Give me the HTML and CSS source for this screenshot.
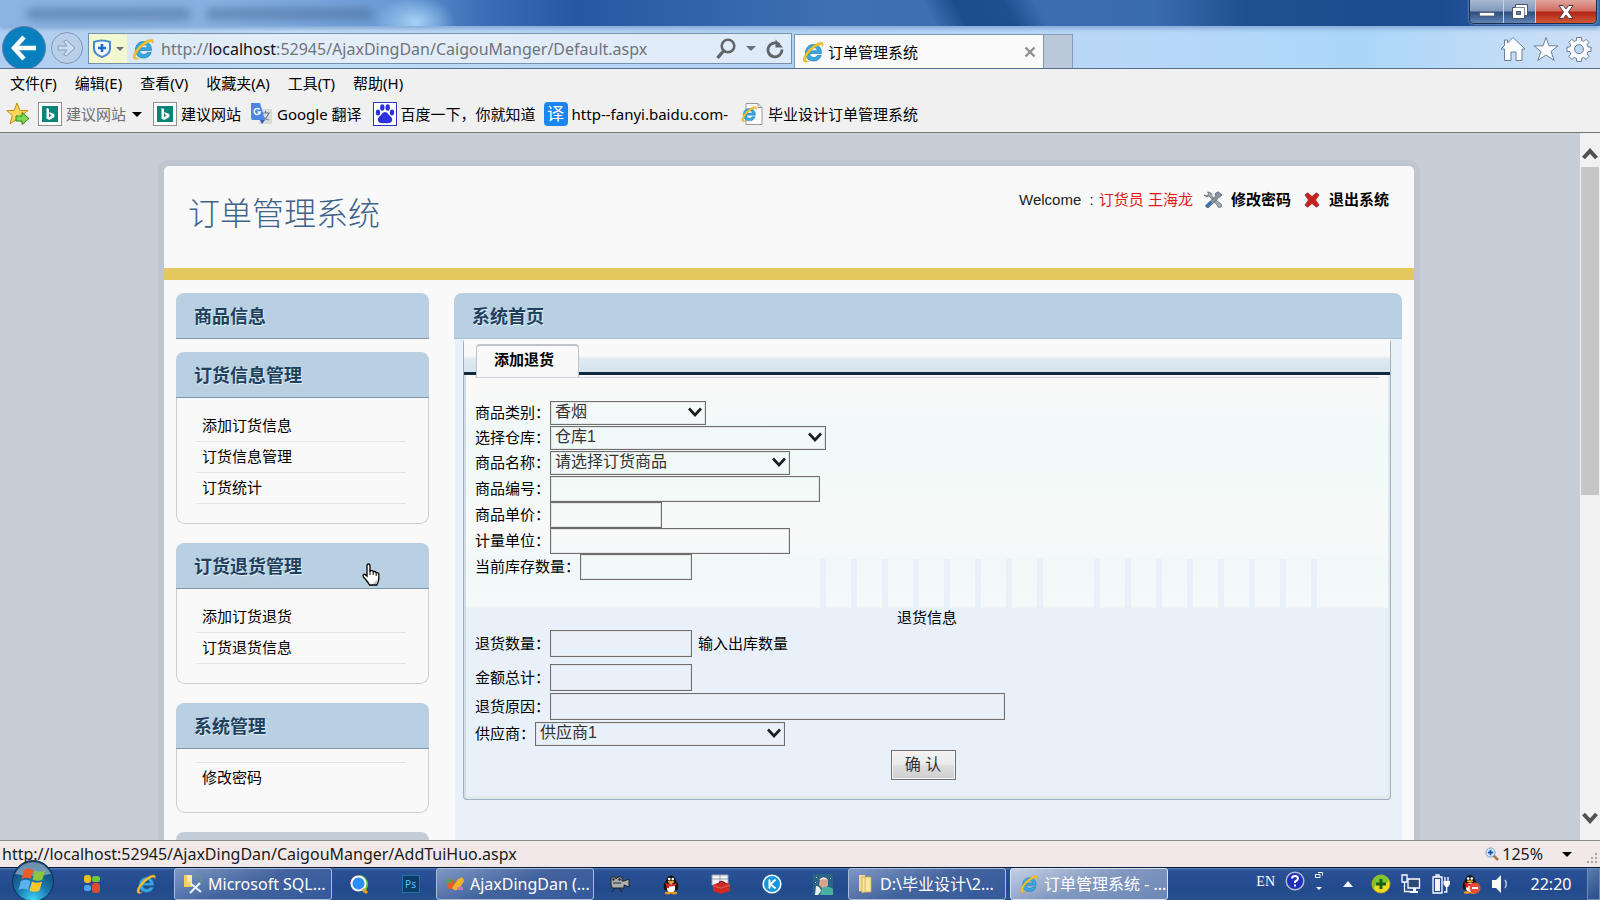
FILE: index.html
```html
<!DOCTYPE html>
<html lang="zh-CN">
<head>
<meta charset="utf-8">
<title>订单管理系统</title>
<link rel="stylesheet" href="styles.css">
</head>
<body>
<svg class="defs" aria-hidden="true">
  <symbol id="ie" viewBox="0 0 24 24">
    <path fill-rule="evenodd" d="M20.500 13.500H8.600C8.800 16 10.400 17.500 12.700 17.500C14.400 17.500 15.600 16.700 16.200 15.500H20.200C19.200 19 16.200 21 12.600 21C7.600 21 4.500 17.600 4.500 12.700C4.500 8 7.800 4.500 12.600 4.500C17.800 4.500 20.700 8.200 20.500 13.500ZM8.700 10.800H16.400C16.200 8.800 14.800 7.500 12.700 7.500C10.500 7.500 9 8.700 8.700 10.800Z" fill="#3aa9e0" stroke="#1c78b8" stroke-width=".7"/>
    <path d="M21.800 6.500C22.600 4.200 22.300 2.500 20.800 2.200C18.100 1.600 12.200 4.800 7.600 9.700C3 14.700 1 20 3 21.800C4.100 22.700 6 22.300 8 21.200C6 21.600 5 21.300 4.800 20C4.500 17.500 7.100 13.200 11.100 9.700C15.100 6.100 19.400 4 20.900 4.800C21.400 5.100 21.700 5.600 21.800 6.500Z" fill="#f5c52c" stroke="#d79a10" stroke-width=".4"/>
  </symbol>
  <symbol id="bing" viewBox="0 0 24 24">
    <rect x=".5" y=".5" width="23" height="23" fill="#fff" stroke="#8d9090"/>
    <rect x="4" y="4" width="16" height="16" fill="#0d8479"/>
    <path d="M8.500 6v10.500l2.800 1.500 5-3v-3l-5.300-2 1 2.600 1.800.8-2.800 1.600V7z" fill="#fff"/>
  </symbol>
  <symbol id="chev" viewBox="0 0 16 12"><path d="M2 2.500 8 9l6-6.500" fill="none" stroke="#1c1c1c" stroke-width="2.600"/></symbol>
  <symbol id="qq" viewBox="0 0 20 22">
    <ellipse cx="10" cy="11" rx="6.500" ry="10" fill="#111"/><ellipse cx="4" cy="13" rx="2" ry="4.500" fill="#111"/><ellipse cx="16" cy="13" rx="2" ry="4.500" fill="#111"/>
    <ellipse cx="10" cy="15" rx="4.600" ry="5.500" fill="#fff"/><circle cx="8" cy="5" r="1.500" fill="#fff"/><circle cx="12" cy="5" r="1.500" fill="#fff"/>
    <ellipse cx="10" cy="8" rx="3.600" ry="1.300" fill="#f6a81c"/><path d="M4 9q6 3.500 12 0v2.600q-6 3-12 0z" fill="#e0201c"/><path d="M5 11h3v4H5z" fill="#e0201c"/>
    <ellipse cx="6.500" cy="20.500" rx="3.500" ry="1.500" fill="#f0951c"/><ellipse cx="13.500" cy="20.500" rx="3.500" ry="1.500" fill="#f0951c"/>
  </symbol>
</svg>

<header class="chrome">
  <div class="titlebar">
    <span class="ghost ghost-a"></span><span class="ghost ghost-b"></span>
    <div class="winbtns">
      <button type="button" class="wb wb-min" aria-label="最小化"><svg width="18" height="16" viewBox="0 0 18 16"><rect x="1.500" y="8.500" width="15" height="3.500" fill="#fff" stroke="#46546c" stroke-width=".8"/></svg></button>
      <button type="button" class="wb wb-max" aria-label="还原"><svg width="20" height="18" viewBox="0 0 20 18"><path d="M5.500 1.500h12v11h-3v3h-12v-11h3z" fill="#fff" stroke="#46546c"/><path d="M6.500 8.500h4v3h-4z" fill="#7086a8" stroke="#46546c"/><path d="M5.500 4.500h9v8" fill="none" stroke="#46546c" stroke-width=".7"/></svg></button>
      <button type="button" class="wb wb-close" aria-label="关闭"><svg width="18" height="16" viewBox="0 0 18 16"><path d="M2 1.500h4.500L9 5l2.500-3.500H16L11.500 8l4.500 6.500h-4.500L9 11l-2.500 3.500H2L6.500 8z" fill="#fff" stroke="#5a3a40"/></svg></button>
    </div>
  </div>
  <div class="navbar">
    <button type="button" class="back" aria-label="后退"><svg width="26" height="26" viewBox="0 0 26 26"><path d="M13 2 3 13l10 11M3 13h22" fill="none" stroke="#fff" stroke-width="4.600"/></svg></button>
    <button type="button" class="forward" aria-label="前进"><svg width="20" height="18" viewBox="0 0 20 18"><path d="M1 7h9L6.500 2.500 9.500 1 18 9l-8.500 8-3-1.500L10 11H1z" fill="#c8dcf2" stroke="#8a9cb8"/></svg></button>
    <div class="address">
      <div class="shield"><svg width="20" height="20" viewBox="0 0 20 20"><path d="M2 3q8-3 16 0v6.500q0 6-8 8.500-8-2.500-8-8.500z" fill="#f4f9ff" stroke="#4a88cc" stroke-width="2"/><path d="M10 5v8M6 9h8" stroke="#1c6cc8" stroke-width="2.600"/></svg><i class="tri tri-s"></i></div>
      <svg class="ie" width="24" height="24"><use href="#ie"/></svg>
      <div class="url">http://<b>localhost</b>:52945/AjaxDingDan/CaigouManger/Default.aspx</div>
      <svg width="20" height="22" viewBox="0 0 20 22"><circle cx="12" cy="8" r="6.300" fill="none" stroke="#5f6469" stroke-width="2.600"/><path d="m7.500 13-6 7" stroke="#5f6469" stroke-width="3.400"/></svg>
      <i class="tri tri-m"></i>
      <svg width="18" height="20" viewBox="0 0 18 20"><path d="M13.500 5.500a7 7 0 1 0 2.500 5" fill="none" stroke="#5f6469" stroke-width="2.800"/><path d="M9.500.5v8h7.500z" fill="#5f6469"/></svg>
    </div>
    <div class="tab">
      <svg width="24" height="24"><use href="#ie"/></svg>
      <span class="tab-title">订单管理系统</span>
      <button type="button" class="tab-close" aria-label="关闭标签"><svg width="12" height="12" viewBox="0 0 12 12"><path d="m1.500 1.500 9 9m0-9-9 9" stroke="#8c8f92" stroke-width="2.300"/></svg></button>
    </div>
    <div class="newtab"></div>
    <div class="tools">
      <svg width="26" height="26" viewBox="0 0 26 26"><path d="M13 1.500 25 13h-3v11.500h-6V16h-5v8.500H4.500V13H1l3.500-3.500V4h3v3z" fill="#fafcff" stroke="#6c8099"/></svg>
      <svg width="26" height="26" viewBox="0 0 26 26"><path d="m13 1.500 3 8.300h9L18 15.500l3.200 9L13 19l-8.200 5.500 3.200-9L1 9.800h9z" fill="#fafcff" stroke="#6c8099"/></svg>
      <svg width="26" height="26" viewBox="0 0 26 26"><path d="M10.500 1.500h5v3l2.300 1 2.200-2.200 3 3-2 2.500 1 2.200h3v4.500h-3l-1 2.500 2 2.300-3 3.200-2.300-2-2.200.9v3h-5v-3l-2.300-.9-2.400 2-3-3.200 2-2.300-1-2.500h-2.800V11h2.800l1-2.200-2-2.500 3-3L8.200 5.500l2.300-1z" fill="#fafcff" stroke="#6c8099"/><circle cx="13" cy="13.200" r="4.500" fill="#bcd8f4" stroke="#6c8099"/></svg>
    </div>
  </div>
</header>

<nav class="menubar">
  <span>文件(F)</span><span>编辑(E)</span><span>查看(V)</span><span>收藏夹(A)</span><span>工具(T)</span><span>帮助(H)</span>
</nav>
<nav class="favbar">
  <svg class="fav-star" width="24" height="24" viewBox="0 0 24 24"><path d="m11 1 3 7.500h8l-6 5 2.300 8L11 17l-7 5 2.300-8.500L.8 8.500H8z" fill="#fbd657" stroke="#c78c1c"/><path d="M10 14h6v-3.500l7 6-7 6V19h-6z" fill="#7ed957" stroke="#2f8a20"/></svg>
  <a href="#" class="fav fav-dim"><svg width="24" height="24"><use href="#bing"/></svg><span>建议网站</span><i class="tri tri-l"></i></a>
  <a href="#" class="fav"><svg width="24" height="24"><use href="#bing"/></svg><span>建议网站</span></a>
  <a href="#" class="fav"><svg width="24" height="24" viewBox="0 0 24 24"><rect x="10" y="7" width="13" height="15" fill="#d8dade"/><path d="M12 11h9M16.500 9v2m3 0q-1 5-5.500 7m-1-4q2 3 7 4" stroke="#6c7a86" stroke-width="1.200" fill="none"/><path d="M2 1h9l5 17H4q-2 0-2-2z" fill="#4a86e8"/><path d="m11 18h5l-3 4z" fill="#2a5cb8"/><path d="M10.500 7.500a3 3 0 1 0 .7 2.500H8.500" stroke="#fff" stroke-width="1.500" fill="none"/></svg><span>Google 翻译</span></a>
  <a href="#" class="fav fav-baidu"><svg width="24" height="24" viewBox="0 0 24 24"><rect x=".5" y=".5" width="23" height="23" fill="#fff" stroke="#2b32c4"/><g fill="#2b32dc"><ellipse cx="5" cy="10.500" rx="2.200" ry="3"/><ellipse cx="9.300" cy="5.500" rx="2.200" ry="3.200"/><ellipse cx="14.700" cy="5.500" rx="2.200" ry="3.200"/><ellipse cx="19" cy="10.500" rx="2.200" ry="3"/><path d="M12 10q2.500 0 4 3 4 3 3 6-1.500 3-7 2-5.500 1-7-2-1-3 3-6 1.500-3 4-3z"/></g></svg><span>百度一下，你就知道</span></a>
  <a href="#" class="fav fav-fanyi"><em class="yi">译</em><span>http--fanyi.baidu.com-</span></a>
  <a href="#" class="fav fav-doc"><svg width="24" height="24" viewBox="0 0 24 24"><path d="M6 1.500h12l4 4v17H6z" fill="#fdfdfd" stroke="#9a9a9a"/><path d="M18 1.500v4h4" fill="none" stroke="#9a9a9a"/><svg x="0" y="3" width="18" height="18"><use href="#ie"/></svg></svg><span>毕业设计订单管理系统</span></a>
</nav>

<div class="viewport">
  <div class="page">
    <div class="site">
      <div class="site-head">
        <h1>订单管理系统</h1>
        <div class="user">
          <span class="welcome">Welcome&nbsp; :</span><span class="who">订货员 王海龙</span>
          <a href="#" class="ulink ulink-a"><svg width="20" height="18" viewBox="0 0 20 18"><path d="M1 4q2 3 5 1l8 9q1 3 3 2.500t1.500-3L9 5.500Q9 1 4.500 1L6 3 4 4.500z" fill="#a4abb4" stroke="#626a74" stroke-width=".8"/><path d="M19 4 15 .8l-3 2 1 2L3 14.500l2 2.500 10-9.500 1.500-1.500z" fill="#8a949e" stroke="#565e68" stroke-width=".8"/><path d="m2 15 5-5 2 2-5 5z" fill="#3a6cb4"/></svg>修改密码</a>
          <a href="#" class="ulink ulink-b"><svg width="16" height="16" viewBox="0 0 16 16"><path d="M1 3 3.500.8 8 4.500 12.500.8 15 3l-3.500 5 3.500 5-2.500 2.200L8 11.500l-4.500 3.700L1 13l3.500-5z" fill="#c8201c" stroke="#8e1a18" stroke-width=".7"/></svg>退出系统</a>
        </div>
      </div>
      <div class="columns">
        <aside class="side">
          <section class="box box-flat"><h2>商品信息</h2></section>
          <section class="box"><h2>订货信息管理</h2>
            <ul><li><a href="#">添加订货信息</a></li><li><a href="#">订货信息管理</a></li><li><a href="#">订货统计</a></li></ul></section>
          <section class="box"><h2>订货退货管理</h2>
            <ul><li><a href="#">添加订货退货</a></li><li><a href="#">订货退货信息</a></li></ul>
            <svg class="hand" width="18" height="23" viewBox="0 0 18 23"><path d="M5 13V2.500q0-1.500 1.400-1.500T8 2.500V8q2.800-1 3.200.7 2.500-.7 3 1 2.600-.2 2.600 1.800V16q-.3 3-2 6H7.500Q6 19 1.500 14q-1-2 .4-2.700 1.300-.3 3.100 1.700z" fill="#fff" stroke="#000" stroke-width="1.300"/><path d="M8 8v4m3.200-3v3m3-2v3" stroke="#000"/><path d="m16 16-5 5h3.500z" fill="#bbb"/></svg></section>
          <section class="box box-topline"><h2>系统管理</h2>
            <ul><li><a href="#">修改密码</a></li></ul></section>
          <section class="box box-next"><h2></h2></section>
        </aside>
        <main class="main">
          <h2 class="main-title">系统首页</h2>
          <div class="main-body">
            <form class="panel">
              <div class="tabs"><button type="button" class="tabbtn">添加退货</button></div>
              <div class="fields">
                <div class="row"><label for="f1">商品类别：</label><span class="sel w156"><select id="f1"><option>香烟</option></select><svg width="16" height="12"><use href="#chev"/></svg></span></div>
                <div class="row"><label for="f2">选择仓库：</label><span class="sel w276"><select id="f2"><option>仓库1</option></select><svg width="16" height="12"><use href="#chev"/></svg></span></div>
                <div class="row"><label for="f3">商品名称：</label><span class="sel w240"><select id="f3"><option>请选择订货商品</option></select><svg width="16" height="12"><use href="#chev"/></svg></span></div>
                <div class="row tight"><label for="f4">商品编号：</label><input id="f4" class="w270" type="text"></div>
                <div class="row tight"><label for="f5">商品单价：</label><input id="f5" class="w112" type="text"></div>
                <div class="row tight"><label for="f6">计量单位：</label><input id="f6" class="w240" type="text"></div>
                <div class="row tight"><label for="f7">当前库存数量：</label><input id="f7" class="w112" type="text"></div>
                <div class="section">退货信息</div>
                <div class="row row-qty"><label for="f8">退货数量：</label><input id="f8" class="w142" type="text"><span class="hint">输入出库数量</span></div>
                <div class="row row-gap"><label for="f9">金额总计：</label><input id="f9" class="w142" type="text"></div>
                <div class="row row-gap"><label for="f10">退货原因：</label><input id="f10" class="w455" type="text"></div>
                <div class="row"><label for="f11">供应商：</label><span class="sel w250"><select id="f11"><option>供应商1</option></select><svg width="16" height="12"><use href="#chev"/></svg></span></div>
                <div class="actions"><button type="button" class="ok">确 认</button></div>
              </div>
            </form>
          </div>
        </main>
      </div>
    </div>
  </div>
  <div class="scroll">
    <svg width="16" height="14" viewBox="0 0 16 14"><path d="m1.500 11 6.500-7 6.500 7" fill="none" stroke="#505254" stroke-width="4"/></svg>
    <div class="thumb"></div>
    <svg class="sdown" width="16" height="14" viewBox="0 0 16 14"><path d="m1.500 3 6.500 7 6.500-7" fill="none" stroke="#505254" stroke-width="4"/></svg>
  </div>
</div>

<div class="status">
  <span class="status-url">http://localhost:52945/AjaxDingDan/CaigouManger/AddTuiHuo.aspx</span>
  <span class="zoom"><svg width="14" height="14" viewBox="0 0 14 14"><path d="m8 8 5 5" stroke="#a8763c" stroke-width="2.500"/><circle cx="5.500" cy="5.500" r="4.600" fill="#dceefc" stroke="#7c9cc4"/><path d="M5.500 2.800v5.400M2.800 5.500h5.400" stroke="#1858b8" stroke-width="1.800"/></svg>125%</span>
  <i class="tri tri-l"></i>
  <svg class="grip" width="12" height="14" viewBox="0 0 12 14"><path d="M9 2h2v2H9zM5 6h2v2H5zM9 6h2v2H9zM1 10h2v2H1zM5 10h2v2H5zM9 10h2v2H9z" fill="#a8a4a4"/></svg>
</div>

<footer class="taskbar">
  <div class="start"><svg width="44" height="42" viewBox="0 0 44 42"><defs><radialGradient id="orb" cx=".5" cy=".95" r=".9"><stop offset="0" stop-color="#3fd4f4"/><stop offset=".45" stop-color="#1a78b0"/><stop offset="1" stop-color="#123f6c"/></radialGradient></defs><circle cx="22" cy="22" r="20.500" fill="url(#orb)" stroke="#0c3055"/><path d="M4 15Q10 3 22 3t18 12q-18 4-36 0z" fill="#dfe9f2" opacity=".45"/><path d="M13 11q5-3 9.500 0l-2.500 9q-4.500-2.500-9.500 0z" fill="#ee5a24"/><path d="M24 11.500q4.500 2.500 10 0l-2.500 9q-5 2.500-10 0z" fill="#8cc63c"/><path d="M10 22q5-2.500 9.500 0L17 31q-4.500-2.500-9.500 0z" fill="#5cb0ec"/><path d="M21 22.500q4.500 2.500 10 0l-2.500 9q-5 2.500-10 0z" fill="#fcc52c"/></svg></div>
  <div class="ql ql-a">
    <svg width="18" height="20" viewBox="0 0 18 20"><rect x="1" y="1" width="7" height="8" rx="3" fill="#f0c020"/><rect x="9" y="2" width="8" height="6" rx="2.500" fill="#6cc83c"/><rect x="1" y="11" width="7" height="6" rx="2.500" fill="#4aa4f0"/><rect x="9" y="9" width="8" height="10" rx="3" fill="#e04a34"/></svg>
    <svg width="22" height="22"><use href="#ie"/></svg>
  </div>
  <button type="button" class="task"><svg width="20" height="20" viewBox="0 0 20 20"><path d="M1 1h8v12H1z" fill="#f3cf5c"/><path d="M4 1h5v7H4z" fill="#faeaa8"/><path d="M10 2h8v9" fill="none" stroke="#58b048" stroke-dasharray="2 1"/><path d="m7 9 11 9M17 9 7 19" stroke="#e8eef8" stroke-width="2.200"/></svg><span>Microsoft SQL...</span></button>
  <div class="ql ql-b">
    <svg width="20" height="20" viewBox="0 0 20 20"><path d="M10 1a9 9 0 0 1 9 9q0 6-5 9z" fill="#5cc43c"/><path d="M1 10a9 9 0 0 1 9-9l3 3z" fill="#e84830"/><circle cx="9.500" cy="9.500" r="7" fill="#2c8ef4" stroke="#f4f8fc" stroke-width="2"/><path d="m14 15 4 4" stroke="#f0a020" stroke-width="3"/></svg>
    <span class="ps">Ps</span>
  </div>
  <button type="button" class="task"><svg width="20" height="18" viewBox="0 0 20 18"><path d="M1 6q4-5 8 0l3 6q-6 4-9 1z" fill="#e85a2c"/><path d="m7 13 6-9q5-4 6 2l-5 8q-4 3-7-1z" fill="#f0b428"/><path d="M1 4h5v4H1z" fill="#50a85c"/><path d="M12 12h6v3h-6z" fill="#c878b8"/></svg><span>AjaxDingDan (...</span></button>
  <div class="ql ql-c">
    <svg width="22" height="18" viewBox="0 0 22 18"><path d="M2 2h4l1 2 2-2h4v4h2l5-2v8l-5-2v3H3l-1-4z" fill="#a8b0ac" stroke="#222"/><path d="M4 8h8M6 13l-3 4m7-4 3 4" stroke="#222"/><circle cx="4.500" cy="4.500" r="1.200" fill="#222"/><circle cx="10.500" cy="4.500" r="1.200" fill="#222"/></svg>
    <svg width="18" height="21"><use href="#qq"/></svg>
    <svg width="20" height="21" viewBox="0 0 20 21"><path d="M1 1h16v10H1z" fill="#f0f2f4" stroke="#98a4b4"/><path d="M9 1v9M1 5h16" stroke="#98a4b4"/><path d="M2 11q8-5 17-1v7l-9 3-8-3z" fill="#cf2a28"/><path d="M8 9q2-3 6 0" fill="none" stroke="#7c1414" stroke-width="1.500"/><path d="m2 12 8 2 9-3" fill="none" stroke="#e0605a"/></svg>
    <svg width="20" height="20" viewBox="0 0 20 20"><circle cx="10" cy="10" r="8.800" fill="#1898dc" stroke="#fff" stroke-width="1.600"/><path d="M7.500 5.500v9m6-9-5 4.800 5 4.200" fill="none" stroke="#fff" stroke-width="2"/></svg>
    <svg width="20" height="21" viewBox="0 0 20 21"><path d="M0 0h20v21H0z" fill="#2a6484"/><path d="M7 5q5-4 8 1v6l-5 3-4-4z" fill="#d8a48c"/><path d="M6 6q4-5 9 0l-4-1z" fill="#eee"/><path d="M9 14q6-3 11 1v6H7z" fill="#48b09c"/><path d="M3 12q4 0 5 5l-3 4H2z" fill="#e8f0f0"/><path d="M3 3h1v1H3zM17 4h1v1h-1zM2 8h1v1H2z" fill="#fff"/></svg>
  </div>
  <button type="button" class="task"><svg width="18" height="20" viewBox="0 0 18 20"><path d="M2 1h6v17l-6-1z" fill="#f4de8c"/><path d="M5 3h9v15H8l-3 1z" fill="#f8e7a0" stroke="#cfa94c" stroke-width=".8"/><path d="M8 3v15" stroke="#d8b860"/></svg><span>D:\毕业设计\2...</span></button>
  <button type="button" class="task task-active"><svg width="20" height="22"><use href="#ie"/></svg><span>订单管理系统 - ...</span></button>
  <div class="tray">
    <span class="lang">EN</span>
    <svg class="help" width="20" height="20" viewBox="0 0 20 20"><circle cx="10" cy="10" r="8.800" fill="#2230b8" stroke="#b8bcd0" stroke-width="1.500"/><path d="M7 7.500Q7 5 10 5t3 2.500q0 1.500-3 3.200V12" fill="none" stroke="#fff" stroke-width="2"/><path d="M9 13.500h2v2H9z" fill="#fff"/></svg>
    <svg class="lbar" width="8" height="20" viewBox="0 0 8 20"><path d="M3 1.500h4.500v3M.5 3.500H5v3H.5z" fill="none" stroke="#fff"/><path d="M1 16h6l-3 3z" fill="#fff"/></svg>
    <svg width="10" height="6" viewBox="0 0 10 6"><path d="M0 6 5 0l5 6z" fill="#f0f4fa"/></svg>
    <svg width="20" height="20" viewBox="0 0 20 20"><circle cx="10" cy="10" r="9" fill="#f0dc20" stroke="#c0a818"/><path d="M10 1a9 9 0 0 0-7 14q1-6 7-5t8-4q-3-5-8-5z" fill="#7cc82c"/><path d="M10 5v10M5 10h10" stroke="#14601c" stroke-width="3"/></svg>
    <svg width="20" height="20" viewBox="0 0 20 20"><path d="M7 5h11.500v9H7z" fill="#2a4878" stroke="#fff" stroke-width="1.300"/><path d="M1 1h5v7H1zM3.500 8v9.500H9" fill="none" stroke="#fff" stroke-width="1.300"/><path d="M9 17h8v2H9zM12 14h3v3h-3z" fill="#fff"/></svg>
    <svg width="20" height="20" viewBox="0 0 20 20"><path d="M2 3h9v16H2zM5 1h3v2H5z" fill="none" stroke="#fff" stroke-width="1.300"/><path d="M4 5h5v12H4z" fill="#f2f4f8"/><path d="M14 3v4m3-4v4" stroke="#fff" stroke-width="1.300"/><path d="M12.500 7H19v3l-2 3h-2.500l-2-3z" fill="#fff"/><path d="M15.700 13v5H13" fill="none" stroke="#fff" stroke-width="1.300"/></svg>
    <svg width="20" height="20" viewBox="0 0 20 20"><svg width="18" height="20"><use href="#qq"/></svg><circle cx="14" cy="14" r="5.500" fill="#e84c34"/><path d="M11 13h6v2h-6z" fill="#fff"/></svg>
    <svg width="18" height="20" viewBox="0 0 18 20"><path d="M1 6h4l5-5v18l-5-5H1z" fill="#f8fafc"/><path d="M14 6q2.500 4 0 8" fill="none" stroke="#b8c8e0" stroke-width="1.500"/></svg>
    <span class="clock">22:20</span>
    <span class="peek"></span>
  </div>
</footer>
</body>
</html>
```
FILE: styles.css
```css
* { box-sizing: border-box; }
html, body { height: 100%; }
body {
  margin: 0;
  display: flex;
  flex-direction: column;
  overflow: hidden;
  background: #c7ced8;
  color: #000;
  font: 15px/20px "Liberation Sans", "Noto Sans CJK SC", sans-serif;
}
button, input, select { font: inherit; color: inherit; margin: 0; padding: 0; border-radius: 0; }
a { color: inherit; text-decoration: none; }
svg { flex: none; display: block; }
.defs { position: absolute; width: 0; height: 0; }
.tri { flex: none; display: block; width: 0; height: 0; border: 4px solid transparent; border-bottom: 0; border-top-color: #6a7075; }
.tri-m { border-width: 5px; border-bottom: 0; }
.tri-l { border-width: 5px; border-bottom: 0; border-top-color: #000; }

/* browser chrome */
.chrome {
  flex: none;
  height: 69px;
  overflow: hidden;
  border-bottom: 1px solid #56708f;
  background: linear-gradient(90deg, #aecdf0 0, #c2dcf6 18%, #b2d2f3 45%, #b9d8f8 70%, #abd6f8 85%, #cfe0f6 100%);
}
.titlebar {
  position: relative;
  height: 26px;
  display: flex;
  justify-content: flex-end;
  background:
    radial-gradient(ellipse 40px 26px at 415px 22px, #a4d2f6 0, transparent 100%),
    linear-gradient(60deg, transparent 58%, #1d4c8c 60%, #1f4f90 63%, transparent 65%),
    linear-gradient(90deg, #8ab4e2 0, #86b0e0 14%, #6c9cd6 24%, #3b70b8 30%, #2459a2 36%, #3e70b2 52%, #3a6cb0 72%, #1e5090 78%, #1c4b90 90%, #3468ae 100%);
  box-shadow: 0 3px 4px #86acd8;
}
.ghost { position: absolute; top: 8px; height: 12px; border-radius: 6px; background: #4a6c98; opacity: 0.55; filter: blur(4px); }
.ghost-a { left: 26px; width: 165px; }
.ghost-b { left: 206px; width: 168px; }
.winbtns { display: flex; height: 24px; margin-right: 3px; border: 1px solid #18304e; border-top: 0; border-radius: 0 0 5px 5px; overflow: hidden; box-shadow: 0 0 2px #d4e2f4; }
.wb { display: flex; align-items: center; justify-content: center; width: 34px; border: 0; border-right: 1px solid #c8d4e6; background: linear-gradient(#a8b8d2 0, #8298bc 48%, #2c4d80 52%, #6284b4 100%); }
.wb-max { width: 32px; }
.wb-close { width: 60px; border-right: 0; background: linear-gradient(#e0a49c 0, #cf6c60 48%, #b02414 52%, #cf5838 100%); }
.navbar { display: flex; height: 42px; padding: 0 8px 0 2px; align-items: flex-end; font-family: "Noto Sans", "Noto Sans CJK SC", sans-serif; }
.back { position: relative; flex: none; width: 44px; height: 44px; margin-bottom: -2px; border: 1px solid #5b7fa6; border-radius: 22px; background: #0880c0; display: flex; align-items: center; justify-content: center; }
.forward { flex: none; width: 32px; height: 32px; margin: 0 4px 4px 5px; border: 1px solid #8498b6; border-radius: 16px; background: #b8cfe9; display: flex; align-items: center; justify-content: center; }
.address { flex: 0 1 704px; height: 31px; margin: 0 2px 4px 1px; padding-right: 7px; display: flex; align-items: center; gap: 10px; border: 1px solid #7790ac; background: linear-gradient(90deg, #d8e7f6, #e4eef9 30%, #deebf8); }
.shield { flex: none; width: 38px; height: 29px; display: flex; align-items: center; justify-content: center; gap: 4px; background: #f2f8d0; }
.ie { margin-left: -6px; }
.url { flex: 1; min-width: 0; white-space: nowrap; overflow: hidden; color: #6f7479; font-size: 16px; line-height: 24px; margin-left: -4px; }
.url b { font-weight: 400; color: #111; }
.tab { flex: 0 1 250px; height: 34px; padding: 0 7px 0 6px; display: flex; align-items: center; gap: 3px; border: 1px solid #7f98b4; border-bottom: 0; background: #fafafa; }
.tab-title { flex: 1; white-space: nowrap; }
.tab-close { border: 0; background: none; }
.newtab { flex: none; width: 29px; height: 34px; border: 1px solid #8a9db8; border-left: 0; border-bottom: 0; background: #bac8da; }
.tools { margin-left: auto; padding-bottom: 6px; display: flex; gap: 7px; }

.menubar, .favbar { flex: none; display: flex; align-items: center; background: #f0f0f0; white-space: nowrap; font-family: "Noto Sans", "Noto Sans CJK SC", sans-serif; }
.menubar { height: 28px; padding-left: 10px; gap: 18px; }
.favbar { height: 36px; padding: 0 0 1px 6px; gap: 8px; border-bottom: 1px solid #747872; }
.fav { display: flex; align-items: center; gap: 4px; }
.fav-dim { color: #6f6f6f; margin-right: 3px; }
.fav-dim .tri { margin-left: 2px; }
.fav-baidu { margin-left: 3px; }
.fav-doc { margin-left: 4px; }
.yi { width: 24px; height: 24px; border-radius: 4px; background: #1a86ee; color: #fff; font-size: 17px; font-style: normal; line-height: 23px; text-align: center; }

/* web page */
.viewport { flex: 1; min-height: 0; display: flex; overflow: hidden; }
.page { flex: 1; min-width: 0; padding: 33px 2px 0 0; overflow: hidden; }
.site { max-width: 1250px; min-height: 800px; margin: 0 auto; border-radius: 5px 5px 0 0; background: #f9f9f9; box-shadow: 0 0 0 6px #bec6d0; }
.site-head { display: flex; justify-content: space-between; height: 114px; padding: 22px 25px 0 24px; border-bottom: 12px solid #e6c860; }
h1 { margin: 1px 0 0; color: #3c638a; font-family: "Noto Sans CJK SC", sans-serif; font-size: 32px; line-height: 44px; font-weight: 300; }
.user { display: flex; height: 24px; align-items: center; white-space: nowrap; }
.welcome { color: #222; }
.who { margin-left: 5px; color: #e01818; }
.ulink { display: flex; align-items: center; font-weight: 700; }
.ulink-a { gap: 8px; margin-left: 10px; }
.ulink-b { gap: 9px; margin-left: 13px; }
.columns { display: flex; gap: 25px; padding: 13px 12px 0; }
.side { flex: none; width: 253px; }
h2 { margin: 0; height: 46px; padding: 0 18px; border-bottom: 1px solid #7f97a8; border-radius: 8px 8px 0 0; background: #b8d0e2; color: #1f405c; font: 700 18px/45px "Noto Sans CJK SC", sans-serif; text-shadow: 1px 1px 1px #e4f0f8; }
.box { position: relative; margin-bottom: 19px; }
.box-flat { margin-bottom: 13px; }
.box-next h2 { background: #c2cdd8; }
.box ul { margin: 0; padding: 13px 22px 19px 19px; list-style: none; border: 1px solid #cfcfcf; border-top: 0; border-radius: 0 0 9px 9px; }
.box li { padding: 0 6px; border-bottom: 1px solid #e4e4e4; line-height: 30px; }
.box-topline li { border-bottom: 0; border-top: 1px solid #e4e4e4; }
.hand { position: absolute; right: 49px; top: 20px; }
.main { flex: 1; min-width: 0; }
.main-title { border-bottom-color: #a9c0d2; }
.main-body { min-height: 560px; padding: 0 11px 0 8px; margin-left: 1px; background: #e8f1fa; }
.panel {
  border: 1px solid #9fb0bf;
  border-top: 0;
  border-radius: 4px;
  background:
    repeating-linear-gradient(90deg, #e8f1fa 0 6px, transparent 6px 31px) 356px 220px / 223px 50px no-repeat,
    repeating-linear-gradient(90deg, #e8f1fa 0 6px, transparent 6px 31px) 630px 220px / 223px 50px no-repeat,
    linear-gradient(#f9f9f9 0, #f9f9f9 54px, #f0f9f8 90px, #f2faf8 150px, #f9f9f9 190px, #f0f8f8 230px, #f5faf9 268px, #e8f1fa 269px, #e8f1fa 100%);
  box-shadow: inset 2px 0 #d3dde6, inset -2px -3px #e0e9ec;
}
.tabs { height: 36px; padding: 5px 0 0 12px; border-bottom: 3px solid #12283c; background: linear-gradient(#f9f9f9 50%, #e0e9f0 60%, #d5e4ef 100%); }
.tabbtn { display: block; width: 103px; height: 33px; padding: 0 0 3px 17px; border: 1px solid #c0c4c8; border-top: 2px solid #c0c4c8; border-bottom: 0; border-radius: 4px 4px 0 0; background: #f9f9f9; font-weight: 700; text-align: left; }
.fields { margin: 2px 11px 0; padding: 23px 0 19px; border-top: 1px solid #ccd2d8; }
.row { display: flex; align-items: center; margin-bottom: 1px; white-space: nowrap; }
.row.tight { margin-bottom: 0; }
.row-qty.row-qty { margin-bottom: 7px; }
.row-gap { margin-bottom: 2px; }
input { height: 27px; border: 1px solid #6e6e6e; background: transparent; box-shadow: inset 0 0 0 1px #e6e6e6; }
.tight input { height: 26px; }
.sel { position: relative; display: block; height: 24px; }
.sel select { display: block; width: 100%; height: 100%; padding: 0 0 3px 4px; border: 1px solid #6e6e6e; background: transparent; box-shadow: inset 0 0 0 1px #e6e6e6; appearance: none; font-size: 16px; line-height: 20px; color: #333; }
.sel svg { position: absolute; right: 3px; top: 5px; pointer-events: none; }
.w112 { width: 112px; }
.w142 { width: 142px; }
.w156 { width: 156px; }
.w240 { width: 240px; }
.w250 { width: 250px; }
.w270 { width: 270px; }
.w276 { width: 276px; }
.w455 { width: 455px; }
.hint { margin-left: 6px; }
.section { padding: 28px 0 2px; text-align: center; }
.actions { padding: 3px 8px 0 0; text-align: center; }
.ok { width: 65px; height: 30px; border: 1px solid #707070; background: linear-gradient(#f2f2f2, #ebebeb 45%, #dcdcdc 55%, #cfcfcf); box-shadow: inset 0 0 0 1px #f4f4f4; font-size: 16px; color: #333; }
.scroll { flex: none; width: 20px; padding-top: 14px; display: flex; flex-direction: column; align-items: center; background: #f1f1f1; }
.thumb { width: 18px; height: 328px; margin-top: 6px; background: #c6c6c6; }
.sdown { margin: auto 0 15px; }

/* status bar and taskbar */
.status { flex: none; display: flex; align-items: center; height: 27px; padding: 0 2px; border-top: 1px solid #8c8c90; background: #f1e8e9; font: 16px/24px "Noto Sans", sans-serif; color: #1a1a1a; }
.status-url { flex: 1; white-space: nowrap; }
.zoom { display: flex; align-items: center; gap: 3px; margin-right: 19px; }
.grip { margin: 8px 0 0 14px; }
.taskbar { flex: none; height: 33px; display: flex; align-items: center; border-top: 1px solid #0c1c38; background: linear-gradient(#5a80b8 0, #2c5296 2px, #234a8c 60%, #26508f 100%); color: #fff; font: 16px/24px "Noto Sans", "Noto Sans CJK SC", sans-serif; }
.start { flex: none; width: 66px; height: 33px; display: flex; justify-content: center; align-items: flex-end; position: relative; }
.ql { flex: none; display: flex; align-items: center; justify-content: space-around; }
.ql-a { width: 108px; }
.ql-b { width: 104px; }
.ql-c { width: 254px; }
.ps { width: 18px; height: 18px; background: #0c3c68; border: 1px solid #1878a8; color: #58c4f4; font-size: 10px; line-height: 16px; text-align: center; }
.task { flex: 0 1 158px; min-width: 0; height: 32px; padding: 0 6px 0 8px; display: flex; align-items: center; gap: 5px; border: 1px solid #a8bcd8; border-radius: 3px; background: linear-gradient(160deg, #7f98c4, #42639e 50%, #34599c); white-space: nowrap; overflow: hidden; }
.task-active { margin-left: 4px; background: linear-gradient(160deg, #c4d0e2, #8298c0 50%, #6b87b6); border-color: #d8e2f0; }
.tray { flex: none; margin-left: auto; height: 32px; display: flex; align-items: center; gap: 10px; }
.lang { font: 14px/20px "Liberation Serif", serif; margin-bottom: 5px; }
.help, .lbar { margin-bottom: 6px; }
.lbar { margin-right: 10px; }
.tray > svg:nth-of-type(3) { margin-right: 8px; }
.clock { width: 64px; text-align: center; }
.peek { width: 13px; height: 32px; margin-left: -6px; border: 1px solid #6f8cb8; background: linear-gradient(135deg, #5c7cb0, #274c8c); }
```
